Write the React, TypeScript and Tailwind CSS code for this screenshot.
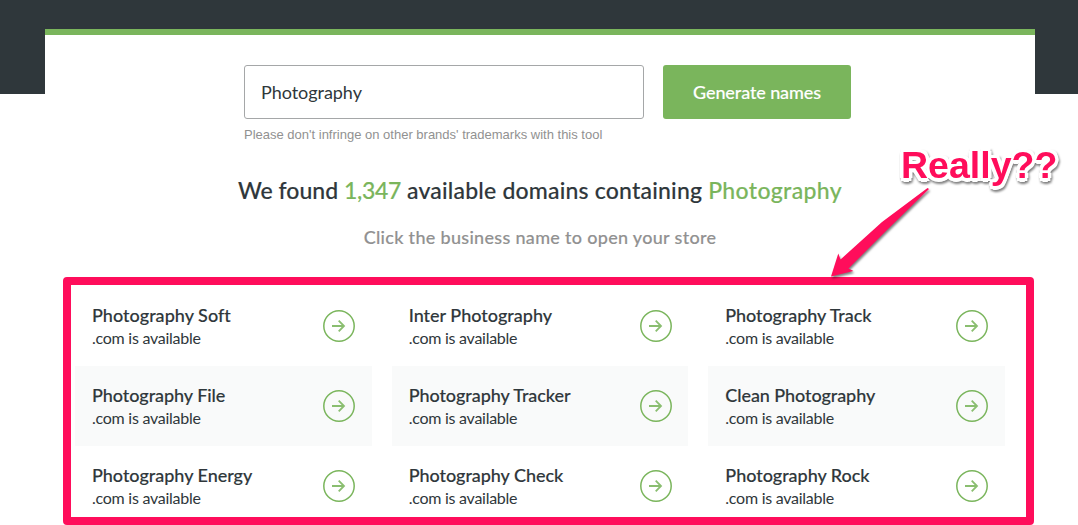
const rows: { name: string; tracking: string }[] = [
  { name: "Photography Soft", tracking: "tracking-[0.02px]" },
  { name: "Inter Photography", tracking: "tracking-[0px]" },
  { name: "Photography Track", tracking: "tracking-[-0.08px]" },
  { name: "Photography File", tracking: "tracking-[-0.06px]" },
  { name: "Photography Tracker", tracking: "tracking-[-0.06px]" },
  { name: "Clean Photography", tracking: "tracking-[-0.08px]" },
  { name: "Photography Energy", tracking: "tracking-[-0.03px]" },
  { name: "Photography Check", tracking: "tracking-[-0.05px]" },
  { name: "Photography Rock", tracking: "tracking-[-0.03px]" },
];

function ArrowCircle() {
  return (
    <svg className="size-8 shrink-0" viewBox="0 0 32 32" fill="none" stroke="#7ab55c">
      <circle cx="16" cy="16" r="15.2" strokeWidth="1.5" />
      <path d="M9 16H21M15.7 10.7L21 16L15.7 21.3" strokeWidth="1.8" stroke="#8abe70" />
    </svg>
  );
}

function DomainCard({ name, tracking, shaded }: { name: string; tracking: string; shaded: boolean }) {
  return (
    <a className={`flex h-20 items-center justify-between pl-[17px] pr-[16.7px] ${shaded ? "bg-[#f9fafa]" : "bg-white"}`}>
      <span className="flex flex-col whitespace-nowrap">
        <span className={`text-[18px] leading-6 font-medium [-webkit-text-stroke:0.15px] ${tracking}`}>{name}</span>
        <span className="text-[16px] leading-[22px] tracking-[-0.26px]">.com is available</span>
      </span>
      <ArrowCircle />
    </a>
  );
}

export default function App() {
  return (
    <div className="h-[525px] w-[1078px] overflow-hidden bg-[linear-gradient(#2f373b_94px,#fff_94px)] pt-[29px] pl-[45px] font-['Lato',sans-serif] text-[#2f373b]">
      <main className="relative h-[496px] w-[990px] border-t-6 border-[#7ab55c] bg-white pt-[30px]">
        <form className="ml-[199px] flex gap-[19px]">
          <input
            className="h-[54px] w-[400px] rounded-[3px] border border-[#a5a7a8] bg-white px-4 text-[18px] tracking-[-0.04px] outline-none"
            defaultValue="Photography"
          />
          <button
            type="button"
            className="h-[54px] w-[188px] rounded-[3px] bg-[#7ab55c] text-[18px] font-medium tracking-[-0.1px] text-white [-webkit-text-stroke:0.15px]"
          >
            Generate names
          </button>
        </form>
        <p className="mt-[7px] ml-[199px] font-['Liberation_Sans',sans-serif] text-[13px] leading-[18px] text-[#919191]">
          Please don't infringe on other brands' trademarks with this tool
        </p>
        <h1 className="mt-[30px] text-center text-[23px] leading-8 font-medium whitespace-nowrap [-webkit-text-stroke:0.15px]">
          We found <span className="tracking-[-0.3px] text-[#7ab55c]">1,347</span>
          <span className="tracking-[0.2px]"> available domains containing </span>
          <span className="tracking-[0.34px] text-[#7ab55c]">Photography</span>
        </h1>
        <p className="mt-[19px] text-center text-[18px] leading-6 font-medium tracking-[0.31px] text-[#919191] [-webkit-text-stroke:0.15px]">
          Click the business name to open your store
        </p>
        <section className="mt-[37px] ml-[30px] grid w-[930px] grid-cols-3 gap-x-5">
          {rows.map((row, i) => (
            <DomainCard key={row.name} {...row} shaded={Math.floor(i / 3) === 1} />
          ))}
        </section>
        <div className="pointer-events-none absolute top-[242px] left-[18px] h-[248px] w-[971px] rounded-[4px] border-8 border-[#ff0d5b]" />
        <svg className="absolute top-[145px] left-[775px] h-[115px] w-[125px] overflow-visible" viewBox="820 180 125 115">
          <path
            className="drop-shadow-[1px_2px_1px_rgba(0,0,0,0.5)]"
            d="M927.5 188L882 222L840.5 259.5L838.3 253.5L831 276.5L853.5 271L848.5 268.5L888 229L929 189Z"
            fill="#ff0d5b"
          />
        </svg>
        <div className="absolute top-[107px] left-[856px] font-['Liberation_Sans',sans-serif] text-[37.5px] leading-[46px] font-bold whitespace-nowrap text-[#ff0d5b] drop-shadow-[1px_2px_1px_rgba(0,0,0,0.5)] [text-shadow:3.5px_0_0_#fff,-3.5px_0_0_#fff,0_3.5px_0_#fff,0_-3.5px_0_#fff,2.6px_2.6px_0_#fff,-2.6px_2.6px_0_#fff,2.6px_-2.6px_0_#fff,-2.6px_-2.6px_0_#fff]">
          Really??
        </div>
      </main>
    </div>
  );
}
